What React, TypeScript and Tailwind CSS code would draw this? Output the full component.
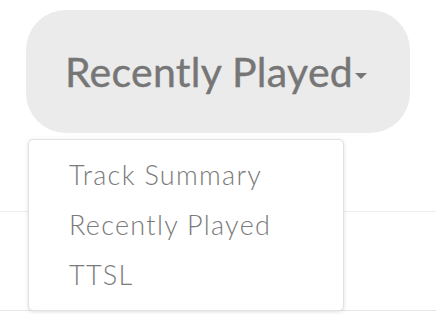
import { useState } from "react";

const items = ["Track Summary", "Recently Played", "TTSL"];

export default function App() {
  const [selected, setSelected] = useState("Recently Played");

  return (
    <div className="relative h-[314px] w-[436px] overflow-hidden bg-white" style={{ fontFamily: "Lato, 'Open Sans', sans-serif" }}>
      <div className="pl-[26px] pt-[10px]">
        <button
          type="button"
          className="flex h-[123px] w-[384px] items-center justify-center rounded-[40px] bg-[#ebebeb] pr-[4px] text-[41px] text-[#767676]"
        >
          <span className="tracking-[0.3px] [-webkit-text-stroke:0.4px_#767676]">{selected}</span>
          <span className="ml-[2px] mt-[8px] h-0 w-0 border-x-[6px] border-t-[6px] border-x-transparent border-t-[#767676]" />
        </button>
      </div>

      <div className="mt-[78px] border-t border-[#eeeeee]" />
      <div className="mt-[98px] border-t border-[#e6e6e6]" />

      <div className="absolute left-[28px] top-[139px] w-[316px] rounded-[5px] border border-[#e2e2e2] bg-white py-[10px] shadow-[0_1px_4px_rgba(0,0,0,0.12)]">
        {items.map((item) => (
          <button
            key={item}
            type="button"
            onClick={() => setSelected(item)}
            className="block h-[50px] w-full pl-[40px] text-left text-[27px] font-light leading-[50px] tracking-[1.3px] text-[#7a7a7a]"
          >
            {item}
          </button>
        ))}
      </div>
    </div>
  );
}
